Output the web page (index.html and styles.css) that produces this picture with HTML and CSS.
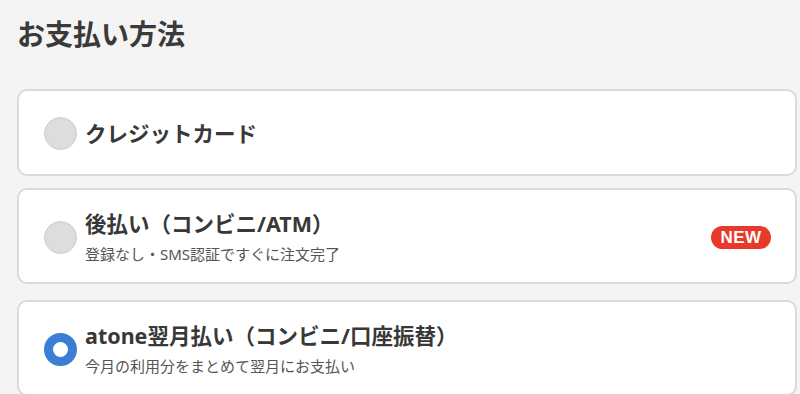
FILE: index.html
```html
<!DOCTYPE html>
<html lang="ja">
<head>
<meta charset="utf-8">
<title>お支払い方法</title>
<link rel="stylesheet" href="styles.css">
</head>
<body>
<main class="page">
  <h1 class="heading">お支払い方法</h1>
  <div class="options">
    <div class="option">
      <span class="radio"></span>
      <div class="option-text">
        <div class="option-title">クレジットカード</div>
      </div>
    </div>
    <div class="option">
      <span class="radio"></span>
      <div class="option-text">
        <div class="option-title">後払い（コンビニ/ATM）</div>
        <div class="option-sub">登録なし・SMS認証ですぐに注文完了</div>
      </div>
      <span class="badge">NEW</span>
    </div>
    <div class="option option-selected">
      <span class="radio radio-on"></span>
      <div class="option-text">
        <div class="option-title">atone翌月払い（コンビニ/口座振替）</div>
        <div class="option-sub">今月の利用分をまとめて翌月にお支払い</div>
      </div>
    </div>
  </div>
</main>
</body>
</html>
```
FILE: styles.css
```css
html, body {
  margin: 0;
  padding: 0;
  background: #f4f4f4;
}
body {
  font-family: "Noto Sans", "Noto Sans CJK JP", sans-serif;
  color: #383838;
  overflow: hidden;
}
.page {
  padding: 0 3px 0 17px;
}
.heading {
  margin: 14px 0 35px;
  font-size: 28px;
  line-height: 40px;
  font-weight: 700;
  color: #3a3a3a;
}
.options {
  display: flex;
  flex-direction: column;
  gap: 12px;
}
.option {
  display: flex;
  align-items: center;
  gap: 8px;
  box-sizing: border-box;
  min-height: 87px;
  padding: 20px 24px 18px 25px;
  background: #fff;
  border: 2px solid #dadada;
  border-radius: 10px;
}
.option-selected {
  margin-top: 4px;
}
.radio {
  flex: none;
  width: 33px;
  height: 33px;
  box-sizing: border-box;
  border-radius: 50%;
  background: #dddddd;
  border: 1px solid #cccccc;
}
.radio-on {
  background: #fff;
  border: 9px solid #3a7fd5;
}
.option-text {
  flex: 1;
  min-width: 0;
}
.option-title {
  font-size: 21.5px;
  line-height: 28px;
  font-weight: 700;
  color: #383838;
}
.option-sub {
  margin-top: 6px;
  font-size: 15px;
  line-height: 20px;
  color: #555;
}
.badge {
  flex: none;
  width: 60px;
  height: 23px;
  border-radius: 12px;
  background: #e8392a;
  color: #fff;
  font-family: "Liberation Sans", Arial, sans-serif;
  font-weight: 700;
  font-size: 17px;
  line-height: 23px;
  letter-spacing: 0.5px;
  text-align: center;
}
```
